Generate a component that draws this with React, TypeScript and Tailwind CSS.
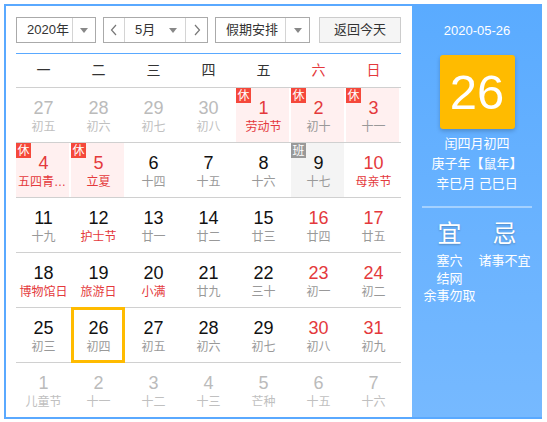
import React from 'react'

type Cell = {
  d: number
  l: string
  other?: boolean
  red?: boolean
  lred?: boolean
  tag?: '休' | '班'
  sel?: boolean
}

const rows: Cell[][] = [
  [
    { d: 27, l: '初五', other: true },
    { d: 28, l: '初六', other: true },
    { d: 29, l: '初七', other: true },
    { d: 30, l: '初八', other: true },
    { d: 1, l: '劳动节', red: true, lred: true, tag: '休' },
    { d: 2, l: '初十', red: true, tag: '休' },
    { d: 3, l: '十一', red: true, tag: '休' },
  ],
  [
    { d: 4, l: '五四青年节', red: true, lred: true, tag: '休' },
    { d: 5, l: '立夏', red: true, lred: true, tag: '休' },
    { d: 6, l: '十四' },
    { d: 7, l: '十五' },
    { d: 8, l: '十六' },
    { d: 9, l: '十七', tag: '班' },
    { d: 10, l: '母亲节', red: true, lred: true },
  ],
  [
    { d: 11, l: '十九' },
    { d: 12, l: '护士节', lred: true },
    { d: 13, l: '廿一' },
    { d: 14, l: '廿二' },
    { d: 15, l: '廿三' },
    { d: 16, l: '廿四', red: true },
    { d: 17, l: '廿五', red: true },
  ],
  [
    { d: 18, l: '博物馆日', lred: true },
    { d: 19, l: '旅游日', lred: true },
    { d: 20, l: '小满', lred: true },
    { d: 21, l: '廿九' },
    { d: 22, l: '三十' },
    { d: 23, l: '初一', red: true },
    { d: 24, l: '初二', red: true },
  ],
  [
    { d: 25, l: '初三' },
    { d: 26, l: '初四', sel: true },
    { d: 27, l: '初五' },
    { d: 28, l: '初六' },
    { d: 29, l: '初七' },
    { d: 30, l: '初八', red: true },
    { d: 31, l: '初九', red: true },
  ],
  [
    { d: 1, l: '儿童节', other: true },
    { d: 2, l: '十一', other: true },
    { d: 3, l: '十二', other: true },
    { d: 4, l: '十三', other: true },
    { d: 5, l: '芒种', other: true },
    { d: 6, l: '十五', other: true },
    { d: 7, l: '十六', other: true },
  ],
]

const weekdays = ['一', '二', '三', '四', '五', '六', '日']

function Caret() {
  return <span className="h-0 w-0 border-x-[4px] border-t-[5px] border-x-transparent border-t-[#888]" />
}

function Chevron({ dir }: { dir: 'l' | 'r' }) {
  return (
    <svg width="8" height="12" viewBox="0 0 8 12" fill="none" stroke="#777" strokeWidth="1.2">
      {dir === 'l' ? <polyline points="6,1 1.5,6 6,11" /> : <polyline points="2,1 6.5,6 2,11" />}
    </svg>
  )
}

function DayCell({ c }: { c: Cell }) {
  const num = c.other ? 'text-[#bbb]' : c.red ? 'text-[#e4393c]' : 'text-[#111]'
  const lunar = c.other ? 'text-[#c0c0c0]' : c.lred ? 'text-[#e4393c]' : 'text-[#999]'
  return (
    <div className="relative flex flex-col items-center pt-[10px]">
      {c.tag === '休' && !c.other && <div className="absolute inset-y-0 left-0 right-[2px] bg-[#fff0f0]" />}
      {c.tag === '班' && <div className="absolute inset-y-0 left-0 right-[2px] bg-[#f4f4f4]" />}
      {c.tag && (
        <span
          className={`absolute left-0 top-0 flex h-[15px] w-[15px] items-center justify-center text-[12px] leading-none text-white ${
            c.tag === '休' ? 'bg-[#f5483b]' : 'bg-[#999]'
          }`}
        >
          {c.tag}
        </span>
      )}
      {c.sel && <div className="absolute -bottom-px -top-px left-0 right-px z-10 border-[3px] border-[#ffbb00]" />}
      <span className={`relative text-[18px] leading-[20px] ${num}`}>{c.d}</span>
      <span className={`relative mt-px w-full overflow-hidden text-ellipsis whitespace-nowrap px-[2px] text-center text-[12px] leading-[16px] ${lunar}`}>
        {c.l}
      </span>
    </div>
  )
}

export default function App() {
  return (
    <div className="h-[422px] w-[547px] bg-white p-1 font-['Liberation_Sans','Noto_Sans_CJK_SC',sans-serif]">
      <div className="flex h-[415px] w-[538px] border-y-2 border-l-2 border-[#5aa9ff]">
        {/* calendar side */}
        <div className="flex w-[406px] flex-col pl-[10px] pr-[11px] pt-[11px]">
          <div className="flex h-[26px] text-[13px] text-[#333]">
            <div className="flex w-[80px] border border-[#aaa]">
              <div className="flex w-[55px] items-center pl-[10px]">2020年</div>
              <div className="flex flex-1 items-center justify-center border-l border-[#d4d4d4]">
                <Caret />
              </div>
            </div>
            <div className="ml-[7px] flex w-[105px] border border-[#aaa]">
              <div className="flex w-[21px] items-center justify-center border-r border-[#d4d4d4]">
                <Chevron dir="l" />
              </div>
              <div className="flex flex-1 items-center justify-between pl-[10px] pr-[8px]">
                <span>5月</span>
                <Caret />
              </div>
              <div className="flex w-[22px] items-center justify-center border-l border-[#d4d4d4]">
                <Chevron dir="r" />
              </div>
            </div>
            <div className="ml-[7px] flex w-[95px] border border-[#aaa]">
              <div className="flex w-[69px] items-center pl-[10px]">假期安排</div>
              <div className="flex flex-1 items-center justify-center border-l border-[#d4d4d4]">
                <Caret />
              </div>
            </div>
            <div className="ml-[9px] flex w-[82px] items-center justify-center border border-[#ccc] bg-[#f5f5f5]">
              返回今天
            </div>
          </div>
          <div className="mt-[10px] border-t border-[#5aa9ff]" />
          <div className="grid h-[33px] grid-cols-7 items-center text-center text-[14px]">
            {weekdays.map((w, i) => (
              <span key={w} className={i > 4 ? 'text-[#e4393c]' : 'text-[#333]'}>
                {w}
              </span>
            ))}
          </div>
          {rows.map((r, i) => (
            <div key={i} className="grid h-[55px] grid-cols-7 border-t border-[#d0d0d0]">
              {r.map((c, j) => (
                <DayCell key={j} c={c} />
              ))}
            </div>
          ))}
        </div>

        {/* info panel */}
        <div className="flex w-[130px] flex-col items-center bg-linear-to-b from-[#5aabff] to-[#76b9ff] pt-[15px] text-white">
          <div className="text-[13px] leading-[20px]">2020-05-26</div>
          <div className="mt-[14px] flex h-[74px] w-[75px] items-center justify-center rounded-[3px] bg-[#ffbb00] text-[49px] leading-none shadow-[0_2px_4px_rgba(0,0,0,0.2)]">
            26
          </div>
          <div className="mt-[5px] flex flex-col items-center text-[13px] leading-[20px]">
            <span>闰四月初四</span>
            <span>庚子年【鼠年】</span>
            <span>辛巳月 己巳日</span>
          </div>
          <div className="mt-[12px] h-[2px] w-[110px] bg-white/40" />
          <div className="mt-[12px] flex w-[110px]">
            <div className="flex w-[55px] flex-col items-center">
              <span className="text-[24px] leading-[28px] [text-shadow:0_1px_2px_rgba(0,0,0,0.25)]">宜</span>
              <div className="mt-[4px] flex flex-col items-center whitespace-nowrap text-[13px] leading-[17.5px]">
                <span>塞穴</span>
                <span>结网</span>
                <span>余事勿取</span>
              </div>
            </div>
            <div className="flex w-[55px] flex-col items-center">
              <span className="text-[24px] leading-[28px] [text-shadow:0_1px_2px_rgba(0,0,0,0.25)]">忌</span>
              <div className="mt-[4px] flex flex-col items-center whitespace-nowrap text-[13px] leading-[17.5px]">
                <span>诸事不宜</span>
              </div>
            </div>
          </div>
        </div>
      </div>
    </div>
  )
}
